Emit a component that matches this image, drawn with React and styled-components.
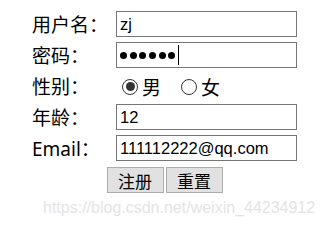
import React from "react";
import styled, { createGlobalStyle } from "styled-components";

const Global = createGlobalStyle`
  html, body { margin: 0; padding: 0; background: #fff; }
  body { font-family: "Noto Sans", "Noto Sans CJK SC", sans-serif; }
`;

const Page = styled.div`
  position: relative;
  width: 326px;
  height: 220px;
  overflow: hidden;
  background: #fff;
`;

const Form = styled.form`
  display: grid;
  grid-template-columns: 84px 181px;
  grid-auto-rows: 26px;
  row-gap: 5px;
  padding: 11px 0 0 32px;
  margin: 0;
`;

const Label = styled.label`
  display: flex;
  align-items: center;
  font-family: "Noto Sans", "Noto Sans CJK SC", sans-serif;
  font-size: 19px;
  color: #000;
  white-space: nowrap;
`;

const Field = styled.div`
  box-sizing: border-box;
  width: 181px;
  height: 26px;
  border: 1px solid #767676;
  padding: 0 3px;
  display: flex;
  align-items: center;
  font-family: "Liberation Sans", "Noto Sans CJK SC", sans-serif;
  font-size: 16.5px;
  color: #000;
  background: #fff;
`;

const Dot = styled.span`
  width: 7px;
  height: 7px;
  border-radius: 50%;
  background: #000;
  margin-right: 2.7px;
  flex: none;
`;

const Caret = styled.span`
  width: 1px;
  height: 20px;
  background: #000;
`;

const RadioGroup = styled.div`
  display: flex;
  align-items: center;
  padding-left: 6px;
`;

const Radio = styled.span`
  box-sizing: border-box;
  width: 16px;
  height: 16px;
  border-radius: 50%;
  border: 1px solid #333;
  display: flex;
  align-items: center;
  justify-content: center;
  flex: none;
  margin-top: 1px;
  &::after {
    content: "";
    width: 9px;
    height: 9px;
    border-radius: 50%;
    background: ${(p) => (p.$checked ? "#333" : "transparent")};
  }
`;

const RadioText = styled.span`
  font-family: "Noto Sans CJK SC", sans-serif;
  font-size: 19px;
  color: #000;
  margin-left: 4px;
  margin-right: ${(p) => (p.$last ? "0" : "20px")};
`;

const Actions = styled.div`
  grid-column: 1 / -1;
  display: flex;
  justify-content: center;
  gap: 2px;
  margin-top: 1px;
`;

const Button = styled.button`
  box-sizing: border-box;
  width: 57px;
  height: 26px;
  background: #e1e1e1;
  border: 1px solid #adadad;
  border-radius: 0;
  padding: 0;
  font-family: "Noto Sans CJK SC", sans-serif;
  font-size: 17px;
  color: #000;
  display: flex;
  align-items: center;
  justify-content: center;
`;

const Watermark = styled.div`
  position: absolute;
  left: 43px;
  top: 199px;
  font-family: "Liberation Sans", Arial, sans-serif;
  font-size: 16px;
  line-height: 18px;
  color: #e4e4e4;
  white-space: nowrap;
`;

export default function App() {
  return (
    <Page>
      <Global />
      <Form onSubmit={(e) => e.preventDefault()}>
        <Label>用户名：</Label>
        <Field>zj</Field>

        <Label>密码：</Label>
        <Field>
          {Array.from({ length: 6 }).map((_, i) => (
            <Dot key={i} />
          ))}
          <Caret />
        </Field>

        <Label>性别：</Label>
        <RadioGroup>
          <Radio $checked />
          <RadioText>男</RadioText>
          <Radio />
          <RadioText $last>女</RadioText>
        </RadioGroup>

        <Label>年龄：</Label>
        <Field>12</Field>

        <Label>Email：</Label>
        <Field>111112222@qq.com</Field>

        <Actions>
          <Button type="submit">注册</Button>
          <Button type="reset">重置</Button>
        </Actions>
      </Form>
      <Watermark>https://blog.csdn.net/weixin_44234912</Watermark>
    </Page>
  );
}
